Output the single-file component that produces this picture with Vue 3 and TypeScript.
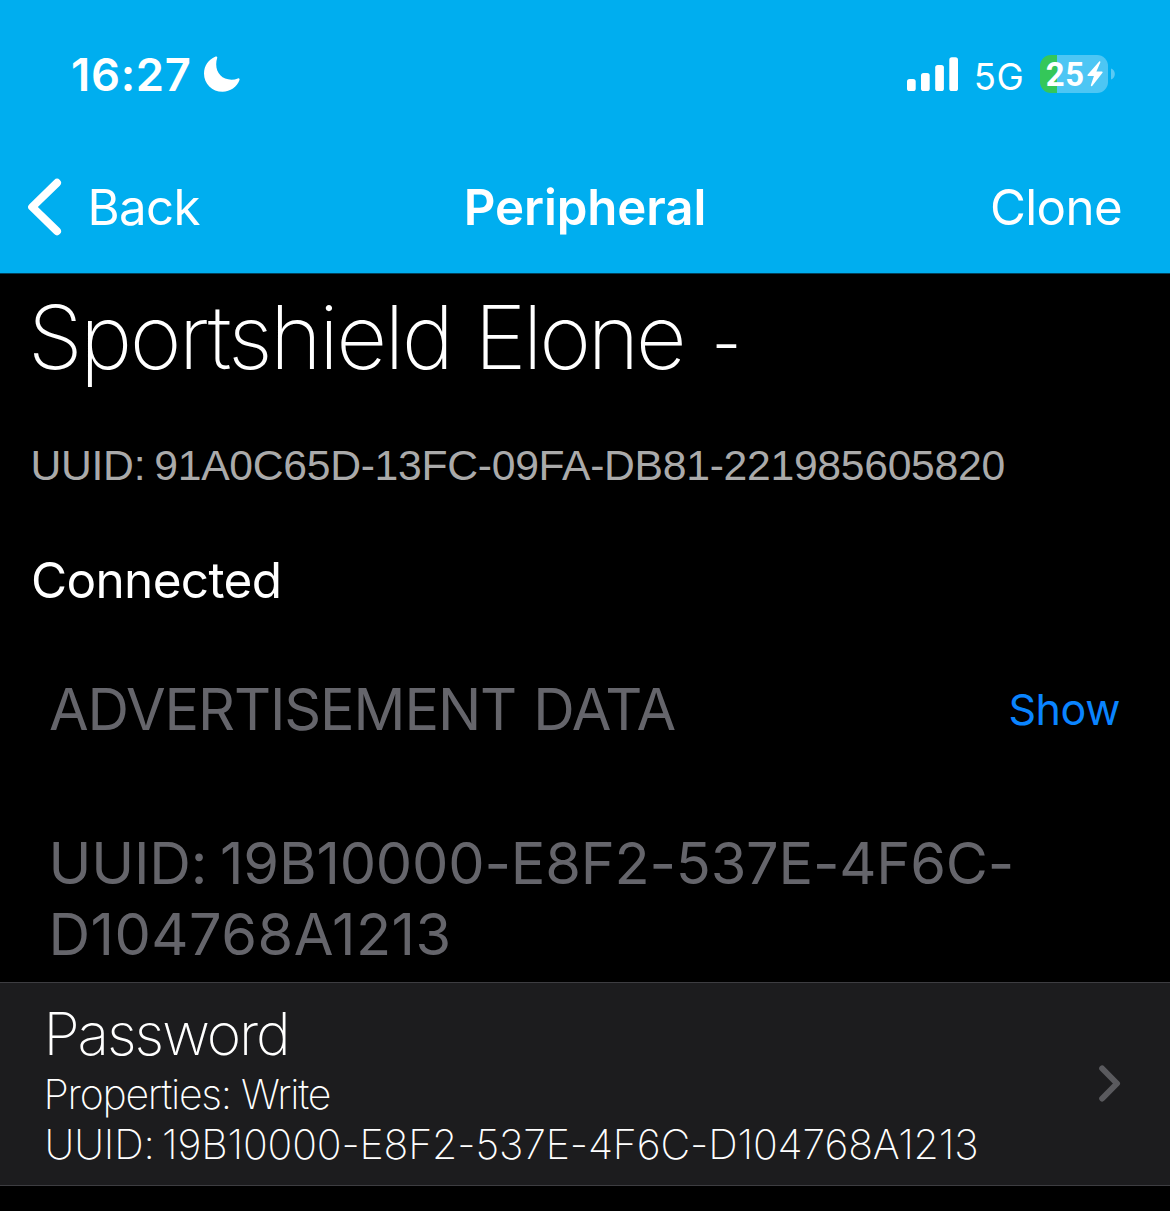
<script setup lang="ts">
interface Characteristic {
  name: string
  properties: string
  uuid: string
}

const peripheral = {
  name: ['Sportshield', 'Elone'],
  uuid: '91A0C65D-13FC-09FA-DB81-221985605820',
  state: 'Connected',
}

const serviceUuid = ['19B10000-E8F2-537E-4F6C-', 'D104768A1213']

const characteristics: Characteristic[] = [
  { name: 'Password', properties: 'Write', uuid: '19B10000-E8F2-537E-4F6C-D104768A1213' },
]
</script>

<template>
  <div class="screen">
    <header class="top">
      <div class="status">
        <span class="time">16:27</span>
        <svg class="moon" width="36" height="36" viewBox="0 0 36 36">
          <path d="M11.2.7C12.300.1 13.700.8 13.200 2.100C12.500 4.300 12.200 6.100 12.200 8.300C12.200 17.200 18.300 23.700 27.500 23.700C29.800 23.700 31.900 23.300 33.800 22.500C35 22 35.900 22.900 35.500 24.100C33 31 26.300 35.700 18.600 35.700C8.100 35.700 0 27.800 0 17.400C0 9.900 4.500 3.400 11.200.7Z" fill="#fff" />
        </svg>
        <div class="indicators">
          <svg class="signal" width="52" height="34" viewBox="0 0 52 34" fill="#fff">
            <rect x="0" y="22" width="8.700" height="12" rx="2.600" />
            <rect x="14" y="16" width="8.700" height="18" rx="2.600" />
            <rect x="28.200" y="8" width="8.700" height="26" rx="2.600" />
            <rect x="42.300" y="0.300" width="8.700" height="33.700" rx="2.600" />
          </svg>
          <span class="network">5G</span>
          <div class="battery">
            <span class="level">25</span>
            <svg class="bolt" width="16" height="26" viewBox="0 0 16 26">
              <path d="M12.200.5L.6 13.700C.2 14.300.5 14.900 1.200 14.900H6.900L3.900 24.100C3.600 25.200 4.500 25.600 5.200 24.900L15.500 11.700C15.900 11.100 15.600 10.500 14.900 10.500H9.400L13.300 1.400C13.700.4 12.900-.2 12.200.5Z" fill="#fff" />
            </svg>
          </div>
          <svg class="nub" width="4" height="12" viewBox="0 0 4 12">
            <path d="M0 0.500C2.300 1.200 3.800 3.300 3.800 6S2.300 10.800 0 11.500Z" fill="#fff" fill-opacity="0.350" />
          </svg>
        </div>
      </div>
      <nav class="nav">
        <a class="back">
          <svg width="34" height="58" viewBox="0 0 34 58">
            <path d="M29 4.800L4.200 29L29 53.200" fill="none" stroke="#fff" stroke-width="8" stroke-linecap="round" stroke-linejoin="round" />
          </svg>
          <span>Back</span>
        </a>
        <h1 class="heading">Peripheral</h1>
        <a class="clone">Clone</a>
      </nav>
    </header>

    <main>
      <section class="device">
        <h2 class="name">
          <span>{{ peripheral.name[0] }}</span>
          <span class="model">{{ peripheral.name[1] }}</span>
          <span class="dash">-</span>
        </h2>
        <p class="uuid">UUID: {{ peripheral.uuid }}</p>
        <p class="state">{{ peripheral.state }}</p>
      </section>

      <div class="section-row">
        <span class="section-title">ADVERTISEMENT DATA</span>
        <a class="show">Show</a>
      </div>

      <div class="service">
        <div class="service-line first">UUID: {{ serviceUuid[0] }}</div>
        <div class="service-line second">{{ serviceUuid[1] }}</div>
      </div>

      <div v-for="c in characteristics" :key="c.uuid" class="cell">
        <div class="cell-text">
          <div class="cell-name">{{ c.name }}</div>
          <div class="cell-props">Properties: {{ c.properties }}</div>
          <div class="cell-uuid">UUID: {{ c.uuid }}</div>
        </div>
        <svg class="chevron" width="22" height="37" viewBox="0 0 22 37">
          <path d="M3.200 3.500L18 18.500L3.200 33.500" fill="none" stroke="#5a5a5e" stroke-width="6" stroke-linecap="round" stroke-linejoin="round" />
        </svg>
      </div>
    </main>
  </div>
</template>

<style>
body {
  margin: 0;
  background: #000;
}
</style>

<style scoped>
.screen {
  width: 1170px;
  height: 1211px;
  overflow: hidden;
  background: #000;
  color: #fff;
  font-family: Inter, "Liberation Sans", sans-serif;
  white-space: nowrap;
}
h1, h2, p {
  margin: 0;
}
.top {
  box-sizing: border-box;
  height: 274px;
  background: #00aeef;
  border-bottom: 1px solid #02405a;
}
.status {
  display: flex;
  align-items: center;
  height: 148px;
  padding: 0 55px 0 71px;
}
.time {
  width: 133px;
  padding-top: 1px;
  font-size: 45.4px;
  font-weight: 600;
  letter-spacing: 0.7px;
}
.indicators {
  display: flex;
  align-items: center;
  margin-left: auto;
}
.network {
  width: 66.3px;
  margin-left: 14.7px;
  padding-top: 5px;
  font-size: 36.5px;
  letter-spacing: 0.5px;
}
.battery {
  box-sizing: border-box;
  display: flex;
  align-items: center;
  width: 68px;
  height: 38px;
  padding-left: 5.7px;
  border-radius: 11px;
  background: linear-gradient(90deg, #34c759 17px, #4dc6f4 17px);
}
.level {
  width: 41px;
  padding-top: 2px;
  font: 700 32.8px Roboto, sans-serif;
  letter-spacing: 0.8px;
}
.nub {
  margin-left: 3px;
}
.nav {
  display: grid;
  grid-template-columns: 1fr auto 1fr;
  align-items: center;
  height: 118px;
  padding: 0 48px 0 28px;
  font-size: 49.2px;
}
.back {
  display: flex;
  align-items: center;
  gap: 25.5px;
  letter-spacing: -0.6px;
}
.heading {
  margin-left: 20px;
  font-size: 49.2px;
  font-weight: 600;
  letter-spacing: -0.09px;
}
.clone {
  justify-self: end;
  letter-spacing: -0.6px;
}
.name {
  display: flex;
  padding: 8px 0 0 27.7px;
  font-size: 88.5px;
  font-weight: 200;
  line-height: 110px;
  letter-spacing: -2.72px;
}
.model {
  margin-left: 23px;
  letter-spacing: -3.6px;
}
.dash {
  margin-left: 23.5px;
  transform: translateY(5px) scaleX(0.77);
}
.uuid {
  margin: 48px 0 0 30.5px;
  color: #aaa;
  font: 42.7px/50px "Liberation Sans", sans-serif;
  letter-spacing: -0.3px;
  word-spacing: -2.5px;
}
.state {
  margin: 60px 0 0 31px;
  font-size: 49.5px;
  line-height: 60px;
  letter-spacing: -0.67px;
}
.section-row {
  display: flex;
  align-items: center;
  justify-content: space-between;
  height: 70px;
  margin-top: 64px;
  padding: 0 50px 0 49px;
}
.section-title {
  color: #65656b;
  font-size: 57.5px;
  letter-spacing: -1.1px;
  word-spacing: 2px;
}
.show {
  color: #0a84ff;
  font-size: 43px;
  letter-spacing: -0.4px;
}
.service {
  margin: 84px 0 0 48.5px;
  color: #65656b;
  font-size: 57.7px;
  line-height: 71px;
}
.first {
  letter-spacing: -0.21px;
  word-spacing: -3px;
}
.second {
  letter-spacing: 0.46px;
}
.cell {
  box-sizing: border-box;
  display: flex;
  align-items: center;
  justify-content: space-between;
  height: 204px;
  margin-top: 12px;
  padding: 0 49px 0 43.5px;
  border: solid #3d3d41;
  border-width: 1px 0;
  background: #1c1c1e;
  font-size: 41px;
  font-weight: 200;
}
.cell-text {
  padding-top: 4px;
}
.chevron {
  margin-bottom: 2px;
}
.cell-name {
  height: 65px;
  font-size: 58.7px;
  line-height: 60px;
  letter-spacing: -2.1px;
}
.cell-props {
  line-height: 50px;
  letter-spacing: -1.25px;
}
.cell-uuid {
  margin-left: 1px;
  line-height: 50px;
  letter-spacing: -0.14px;
  word-spacing: -4px;
}
</style>
